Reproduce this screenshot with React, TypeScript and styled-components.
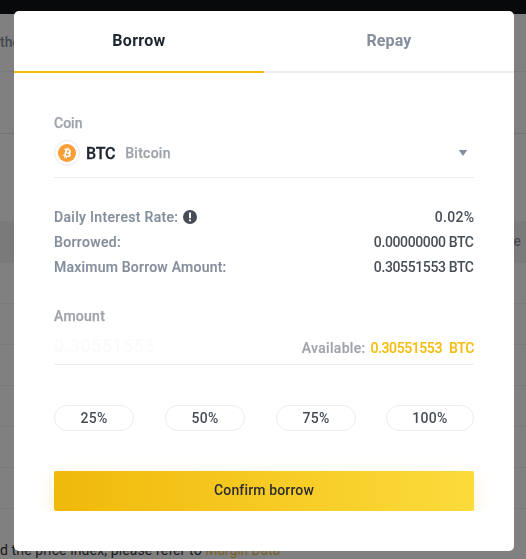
import React from "react";
import styled, { createGlobalStyle } from "styled-components";

const GlobalStyle = createGlobalStyle`
  * { box-sizing: border-box; }
  html, body { margin: 0; height: 100%; overflow: hidden; background: #808080; }
  body { font-family: Roboto, "Noto Sans", sans-serif; font-size: 14px; font-weight: 500; }
`;

const Page = styled.div`
  height: 559px;
  overflow: hidden;
  background: #808080;
`;

const TopBar = styled.div`
  height: 14px;
  background: #08090b;
`;

const PageRow = styled.div<{ $height: number; $shade?: boolean; $line?: string; $end?: boolean }>`
  display: flex;
  align-items: center;
  justify-content: ${(p) => (p.$end ? "flex-end" : "flex-start")};
  height: ${(p) => p.$height}px;
  padding-right: ${(p) => (p.$end ? 5 : 0)}px;
  padding-bottom: 2px;
  background: ${(p) => (p.$shade ? "#7a7a7b" : "transparent")};
  border-bottom: 1px solid ${(p) => p.$line ?? "#797979"};
  color: #43484f;
  font-weight: ${(p) => (p.$end ? 400 : 500)};
  white-space: nowrap;
`;

const Notice = styled.div`
  padding-top: 31px;
  line-height: 20px;
  font-weight: 400;
  letter-spacing: 0.12px;
  color: #17191d;
  white-space: nowrap;
`;

const NoticeLink = styled.span`
  color: #79602a;
  letter-spacing: -0.1px;
`;

const Overlay = styled.div`
  position: fixed;
  inset: 0;
  padding: 11px 12px 8px 14px;
`;

const Modal = styled.div`
  height: 540px;
  border-radius: 5px;
  background: #fff;
  overflow: hidden;
`;

const Tabs = styled.div`
  display: flex;
`;

const Tab = styled.button<{ $active?: boolean }>`
  flex: 1;
  height: 62px;
  padding: 0;
  border: 0;
  border-bottom: 2px solid ${(p) => (p.$active ? "#f0b90b" : "#eeeff0")};
  background: none;
  font: 700 16px/20px Roboto, sans-serif;
  letter-spacing: ${(p) => (p.$active ? 0.3 : 0.15)}px;
  color: ${(p) => (p.$active ? "#1e2632" : "#848e9c")};
`;

const Body = styled.div`
  padding: 40px;
`;

const Label = styled.div<{ $gap?: number; $spacing?: number }>`
  margin-top: ${(p) => p.$gap ?? 0}px;
  line-height: 20px;
  letter-spacing: ${(p) => p.$spacing ?? 0}px;
  color: #9fa4ac;
  -webkit-text-stroke: 0.25px #9fa4ac;
`;

const Select = styled.div`
  display: flex;
  align-items: center;
  height: 45px;
  padding: 0 6px 4px 0;
  border-bottom: 1px solid #eaecef;
`;

const CoinBadge = styled.span`
  display: flex;
  align-items: center;
  justify-content: center;
  width: 26px;
  height: 26px;
  border: 1px solid #e8eaed;
  border-radius: 50%;
`;

const Symbol = styled.span`
  margin-left: 6px;
  font-size: 16px;
  letter-spacing: -0.2px;
  color: #1e2632;
  -webkit-text-stroke: 0.3px #1e2632;
`;

const CoinName = styled.span`
  flex: 1;
  margin-left: 10px;
  letter-spacing: 0.25px;
  color: #9fa4ac;
  -webkit-text-stroke: 0.25px #9fa4ac;
`;

const Details = styled.div`
  margin-top: 26px;
`;

const Detail = styled.div`
  display: flex;
  align-items: center;
  justify-content: space-between;
  height: 25px;
`;

const DetailName = styled.span<{ $spacing: number }>`
  display: flex;
  align-items: center;
  gap: 5px;
  letter-spacing: ${(p) => p.$spacing}px;
  color: #848e9c;
  -webkit-text-stroke: 0.15px #848e9c;
`;

const Value = styled.span<{ $spacing: number }>`
  margin-right: ${(p) => -p.$spacing}px;
  letter-spacing: ${(p) => p.$spacing}px;
  color: #474d57;
`;

const AmountField = styled.div`
  display: flex;
  align-items: center;
  justify-content: space-between;
  height: 39px;
  padding-top: 6px;
  border-bottom: 1px solid #eaecef;
`;

const AmountValue = styled.span`
  padding-bottom: 6px;
  font-size: 18px;
  font-weight: 400;
  letter-spacing: 0.5px;
  color: #fcfaf8;
`;

const Available = styled.span`
  color: #9fa4ac;
  letter-spacing: 0.3px;
  -webkit-text-stroke: 0.15px;
`;

const AvailableAmount = styled.span`
  margin-left: 5px;
  letter-spacing: -0.4px;
  word-spacing: 4px;
  color: #f5bd13;
`;

const Shares = styled.div`
  display: grid;
  grid-template-columns: 111px 111px 110px 88px;
  margin-top: 40px;
`;

const Share = styled.button<{ $width: number }>`
  height: 26px;
  padding: 0;
  width: ${(p) => p.$width}px;
  border: 1px solid #eaecef;
  border-radius: 13px;
  background: #fff;
  font: 500 14px/20px Roboto, sans-serif;
  letter-spacing: 0.3px;
  color: #474d57;
`;

const ConfirmArea = styled.div`
  margin-top: 40px;
  clip-path: inset(-24px -24px 0 -24px);
`;

const Confirm = styled.button`
  display: block;
  width: 100%;
  height: 40px;
  padding: 0;
  border: 0;
  border-radius: 2px;
  background: linear-gradient(90deg, #f0b90b, #fcdb3b);
  box-shadow: 0 7px 20px rgba(240, 185, 11, 0.2);
  font: 500 14px/20px Roboto, sans-serif;
  letter-spacing: 0.15px;
  color: #2b2d30;
`;

const ConfirmText = styled.span`
  display: block;
  padding-bottom: 2px;
`;

const BitcoinIcon = () => (
  <svg width="18" height="18" viewBox="0 0 32 32">
    <circle cx="16" cy="16" r="16" fill="#f99d35" />
    <path
      fill="#fff"
      d="M23.189 14.02c.314-2.096-1.283-3.223-3.465-3.975l.708-2.84-1.728-.43-.69 2.765c-.454-.114-.92-.22-1.385-.326l.695-2.783L15.596 6l-.708 2.839c-.376-.086-.746-.17-1.104-.26l.002-.009-2.384-.595-.46 1.846s1.283.294 1.256.312c.7.175.826.638.805 1.006l-.806 3.235c.048.012.11.03.18.057l-.183-.045-1.13 4.532c-.086.212-.303.531-.793.41.018.025-1.256-.313-1.256-.313l-.858 1.978 2.25.561c.418.105.828.215 1.231.318l-.715 2.872 1.727.43.708-2.84c.472.127.93.245 1.378.357l-.706 2.828 1.728.43.715-2.866c2.948.558 5.164.333 6.097-2.333.752-2.146-.037-3.385-1.588-4.192 1.13-.26 1.98-1.003 2.207-2.538zm-3.95 5.538c-.533 2.147-4.148.986-5.32.695l.95-3.805c1.172.293 4.929.872 4.37 3.11zm.535-5.569c-.487 1.953-3.495.96-4.47.717l.86-3.45c.975.243 4.118.696 3.61 2.733z"
    />
  </svg>
);

const InfoIcon = () => (
  <svg width="14" height="14" viewBox="0 0 14 14">
    <circle cx="7" cy="7" r="7" fill="#474d57" />
    <path d="M6 2.5h2v5.8H6zM6 9.5h2v1.8H6z" fill="#fff" />
  </svg>
);

const Caret = () => (
  <svg width="10" height="6" viewBox="0 0 10 6">
    <path d="M0.7 0h8.6L5 6z" fill="#848e9c" />
  </svg>
);

const shares = [
  { label: "25%", width: 80 },
  { label: "50%", width: 80 },
  { label: "75%", width: 80 },
  { label: "100%", width: 88 },
];

const App = () => (
  <>
    <GlobalStyle />
    <Page>
      <TopBar />
      <PageRow $height={58}>the</PageRow>
      <PageRow $height={62} $line="#747474" />
      <PageRow $height={88} $line="#7a7a7b" />
      <PageRow $height={41} $shade $end $line="#7a7a7b">e</PageRow>
      {[0, 1, 2, 3, 4, 5].map((row) => (
        <PageRow key={row} $height={41} />
      ))}
      <Notice>
        d the price index, please refer to <NoticeLink>Margin Data</NoticeLink>
      </Notice>
    </Page>
    <Overlay>
      <Modal>
        <Tabs>
          <Tab $active>Borrow</Tab>
          <Tab>Repay</Tab>
        </Tabs>
        <Body>
          <Label>Coin</Label>
          <Select>
            <CoinBadge>
              <BitcoinIcon />
            </CoinBadge>
            <Symbol>BTC</Symbol>
            <CoinName>Bitcoin</CoinName>
            <Caret />
          </Select>
          <Details>
            <Detail>
              <DetailName $spacing={0.32}>
                Daily Interest Rate:
                <InfoIcon />
              </DetailName>
              <Value $spacing={0.3}>0.02%</Value>
            </Detail>
            <Detail>
              <DetailName $spacing={0.35}>Borrowed:</DetailName>
              <Value $spacing={-0.38}>0.00000000 BTC</Value>
            </Detail>
            <Detail>
              <DetailName $spacing={0.22}>Maximum Borrow Amount:</DetailName>
              <Value $spacing={-0.38}>0.30551553 BTC</Value>
            </Detail>
          </Details>
          <Label $gap={27} $spacing={0.25}>Amount</Label>
          <AmountField>
            <AmountValue>0.30551553</AmountValue>
            <Available>
              Available:
              <AvailableAmount>0.30551553 BTC</AvailableAmount>
            </Available>
          </AmountField>
          <Shares>
            {shares.map((share) => (
              <Share key={share.label} $width={share.width}>
                {share.label}
              </Share>
            ))}
          </Shares>
          <ConfirmArea>
            <Confirm>
              <ConfirmText>Confirm borrow</ConfirmText>
            </Confirm>
          </ConfirmArea>
        </Body>
      </Modal>
    </Overlay>
  </>
);

export default App;
